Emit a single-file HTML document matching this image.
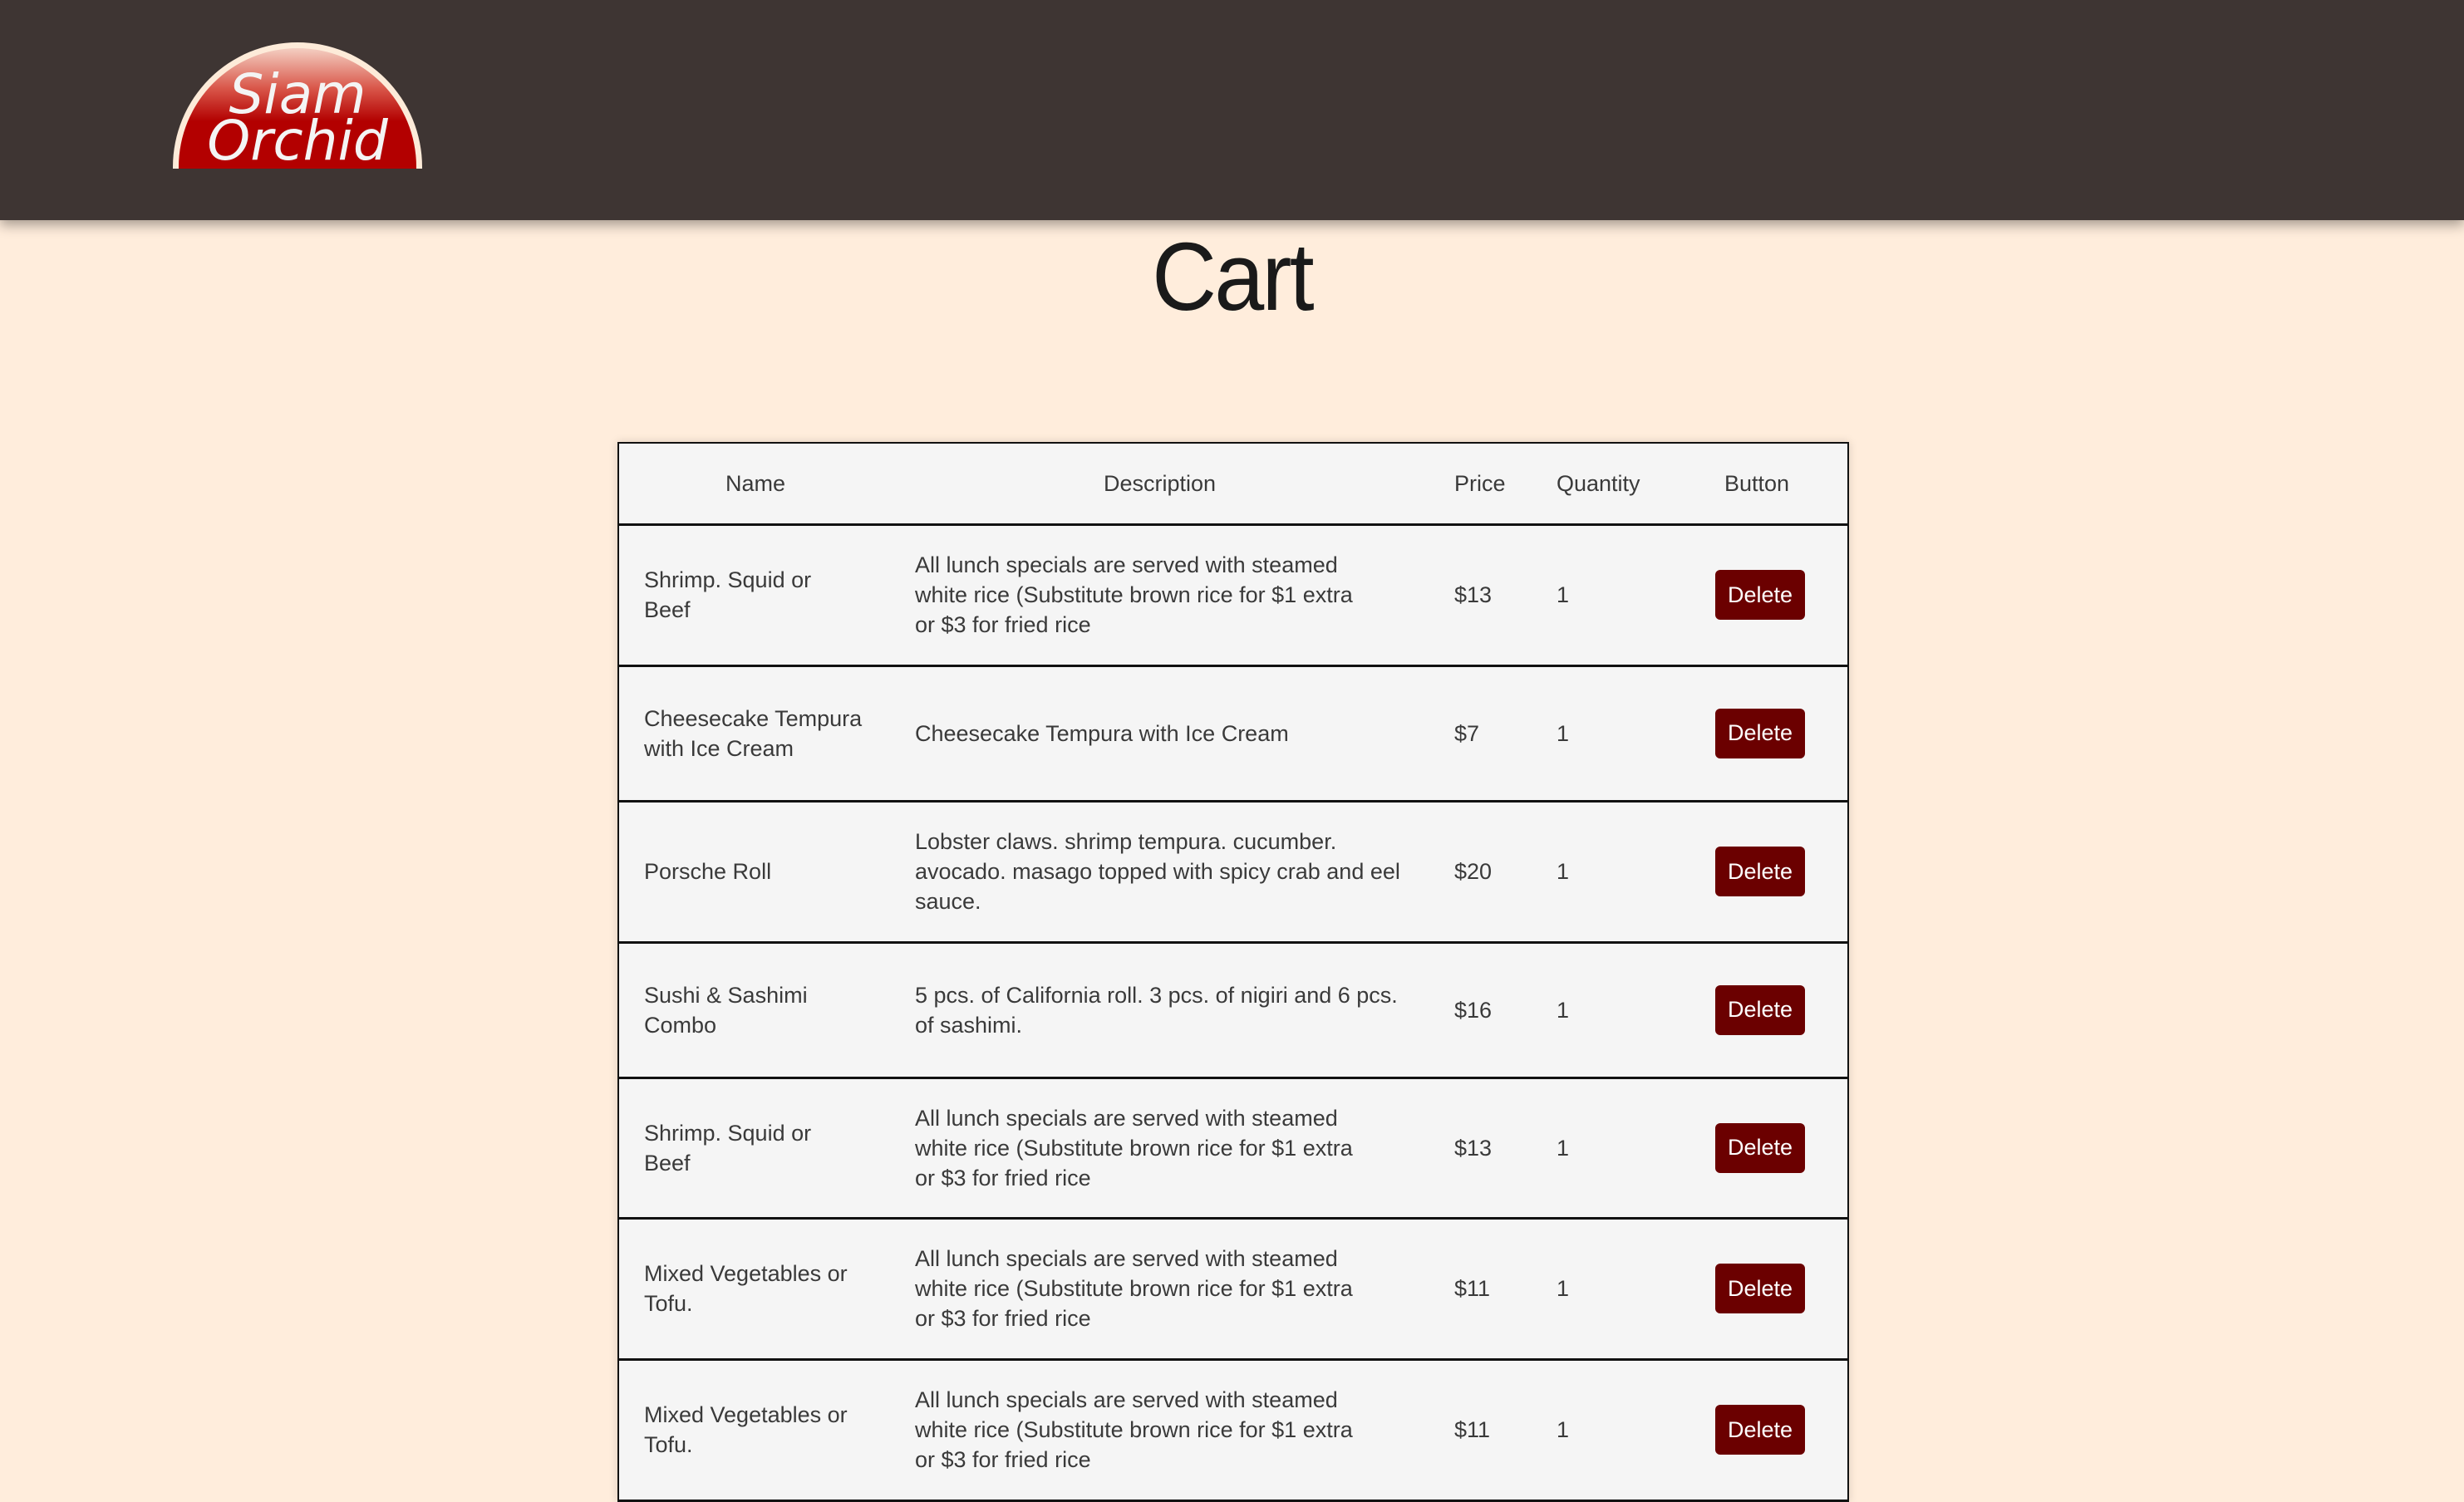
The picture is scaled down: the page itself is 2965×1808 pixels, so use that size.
<!DOCTYPE html>
<html><head><meta charset="utf-8"><style>
*{margin:0;padding:0;box-sizing:border-box}
body{width:2965px;height:1767px;overflow:hidden;background:#ffeddc;font-family:"Liberation Sans",sans-serif;position:relative}
.hdr{position:absolute;left:0;top:0;width:2965px;height:265px;background:#3e3533;box-shadow:0 6px 14px rgba(0,0,0,.35);z-index:2}
.logo{position:absolute;left:208px;top:51px;width:300px;height:152px;border-radius:150px 150px 0 0;background:#fdebd9;overflow:hidden}
.logo .in{position:absolute;left:7px;top:7px;width:286px;height:160px;border-radius:143px 143px 0 0;background:linear-gradient(#f4cfc2 0%,#d9574a 30%,#b30000 55%,#b30000 100%)}
.logo span{position:absolute;left:0;width:300px;text-align:center;color:#f4f4f4;font-family:"DejaVu Sans",sans-serif;font-style:italic;font-size:66px;line-height:1;letter-spacing:0px}
h1{position:absolute;left:0;width:2965px;top:266px;text-align:center;font-weight:normal;font-size:116px;color:#1a1a1a;letter-spacing:-3px;transform:scaleX(.93)}
table{position:absolute;left:743px;top:532px;width:1482px;table-layout:fixed;border-collapse:collapse;background:#f5f5f5;border:2px solid #111;font-size:27px;color:#3a3a3a;box-shadow:0 0 10px rgba(0,0,0,.15)}
td,th{font-weight:normal;border-bottom:3px solid #111;line-height:36px;vertical-align:middle;text-align:left;overflow:hidden;white-space:nowrap}
th{height:98px}
.c1{padding-left:30px}
.c2{padding-left:10px}
.c3{padding-left:24px}
.c4{padding-left:22px}
.c5{padding-left:48px}
th.c1{text-align:center;padding-left:0;padding-right:18px}
th.c2{text-align:center;padding-left:0;padding-right:26px}
th.c5{padding-left:59px}
button{background:#6b0000;color:#fff;border:none;border-radius:6px;font-family:"Liberation Sans",sans-serif;font-size:27px;width:108px;height:60px}
</style></head><body>
<div class="hdr"><div class="logo"><div class="in"></div><span style="top:30px">Siam</span><span style="top:86px">Orchid</span></div></div>
<h1>Cart</h1>
<table>
<colgroup><col style="width:347px"><col style="width:635px"><col style="width:125px"><col style="width:165px"><col></colgroup>
<tr><th class="c1">Name</th><th class="c2">Description</th><th class="c3">Price</th><th class="c4">Quantity</th><th class="c5">Button</th></tr>
<tr style="height:170px"><td class="c1">Shrimp. Squid or<br>Beef</td><td class="c2">All lunch specials are served with steamed<br>white rice (Substitute brown rice for $1 extra<br>or $3 for fried rice</td><td class="c3">$13</td><td class="c4">1</td><td class="c5"><button>Delete</button></td></tr>
<tr style="height:163px"><td class="c1">Cheesecake Tempura<br>with Ice Cream</td><td class="c2">Cheesecake Tempura with Ice Cream</td><td class="c3">$7</td><td class="c4">1</td><td class="c5"><button>Delete</button></td></tr>
<tr style="height:170px"><td class="c1">Porsche Roll</td><td class="c2">Lobster claws. shrimp tempura. cucumber.<br>avocado. masago topped with spicy crab and eel<br>sauce.</td><td class="c3">$20</td><td class="c4">1</td><td class="c5"><button>Delete</button></td></tr>
<tr style="height:163px"><td class="c1">Sushi &amp; Sashimi<br>Combo</td><td class="c2">5 pcs. of California roll. 3 pcs. of nigiri and 6 pcs.<br>of sashimi.</td><td class="c3">$16</td><td class="c4">1</td><td class="c5"><button>Delete</button></td></tr>
<tr style="height:169px"><td class="c1">Shrimp. Squid or<br>Beef</td><td class="c2">All lunch specials are served with steamed<br>white rice (Substitute brown rice for $1 extra<br>or $3 for fried rice</td><td class="c3">$13</td><td class="c4">1</td><td class="c5"><button>Delete</button></td></tr>
<tr style="height:170px"><td class="c1">Mixed Vegetables or<br>Tofu.</td><td class="c2">All lunch specials are served with steamed<br>white rice (Substitute brown rice for $1 extra<br>or $3 for fried rice</td><td class="c3">$11</td><td class="c4">1</td><td class="c5"><button>Delete</button></td></tr>
<tr style="height:170px"><td class="c1">Mixed Vegetables or<br>Tofu.</td><td class="c2">All lunch specials are served with steamed<br>white rice (Substitute brown rice for $1 extra<br>or $3 for fried rice</td><td class="c3">$11</td><td class="c4">1</td><td class="c5"><button>Delete</button></td></tr>
</table>
</body></html>
